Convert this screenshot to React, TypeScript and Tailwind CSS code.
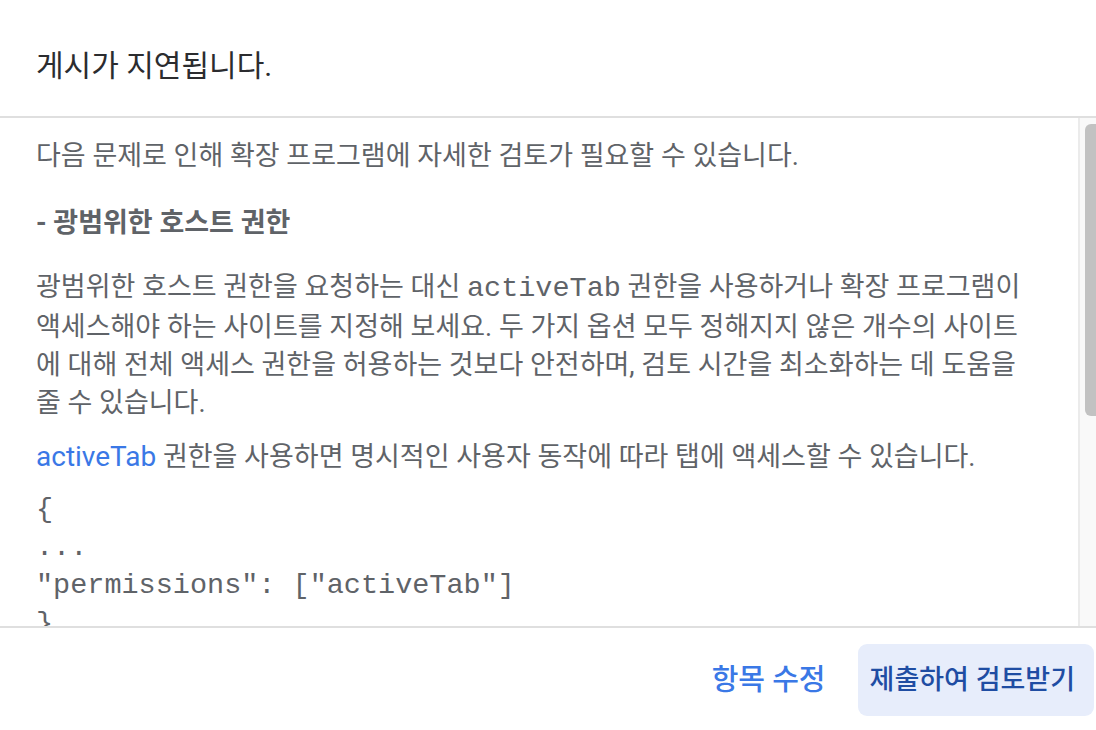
import React from 'react';

const sans = "font-['Roboto','Noto_Sans_CJK_KR',sans-serif]";
const mono = "font-['Liberation_Mono','Courier_New',monospace]";

const Scrollbar = () => {
  return (
    <div className="w-[18px] shrink-0 border-l-2 border-[#ebebeb] bg-[#f9f9f9] pl-[5px] pt-[6px]">
      <div className="h-[292px] w-full rounded-l-[6px] bg-[#c2c2c2]" />
    </div>
  );
};

const App = () => {
  return (
    <div className={`flex h-[730px] w-[1096px] flex-col overflow-hidden bg-white ${sans}`}>
      <header className="h-[116px] shrink-0 px-[36px] pt-[47px]">
        <h1 className="text-[30px] leading-[38px] font-normal text-[#2b2c2f]">게시가 지연됩니다.</h1>
      </header>

      <div className="flex min-h-0 flex-1 border-y-2 border-[#dfdfdf]">
        <div className="min-w-0 flex-1 overflow-hidden pl-[36px] pt-[19px] text-[27px] leading-[38px] text-[#5f6368] whitespace-nowrap">
          <p>다음 문제로 인해 확장 프로그램에 자세한 검토가 필요할 수 있습니다.</p>

          <h2 className="mt-[29px] font-bold">- 광범위한 호스트 권한</h2>

          <p className="mt-[26px]">
            광범위한 호스트 권한을 요청하는 대신 <code className={`${mono} text-[28.5px]`}>activeTab</code> 권한을 사용하거나 확장 프로그램이
            <br />
            액세스해야 하는 사이트를 지정해 보세요. 두 가지 옵션 모두 정해지지 않은 개수의 사이트
            <br />
            에 대해 전체 액세스 권한을 허용하는 것보다 안전하며, 검토 시간을 최소화하는 데 도움을
            <br />
            줄 수 있습니다.
          </p>

          <p className="mt-[16px]">
            <a href="#" className="text-[28px] text-[#3a78e6]">activeTab</a> 권한을 사용하면 명시적인 사용자 동작에 따라 탭에 액세스할 수 있습니다.
          </p>

          <pre className={`mt-[15px] ${mono} text-[28.5px] leading-[38px] text-[#5f6368]`}>
{`{
...
"permissions": ["activeTab"]
}`}
          </pre>
        </div>
        <Scrollbar />
      </div>

      <footer className="flex h-[102px] shrink-0 items-start justify-end gap-[32px] pr-[2px] pt-[16px]">
        <button className="mt-[18px] text-[29px] leading-[36px] font-medium text-[#3a78e6]">항목 수정</button>
        <button className="h-[72px] rounded-[9px] bg-[#e7edfb] pl-[12px] pr-[19px] text-[27px] font-medium text-[#1f4da3]">
          제출하여 검토받기
        </button>
      </footer>
    </div>
  );
};

export default App;
